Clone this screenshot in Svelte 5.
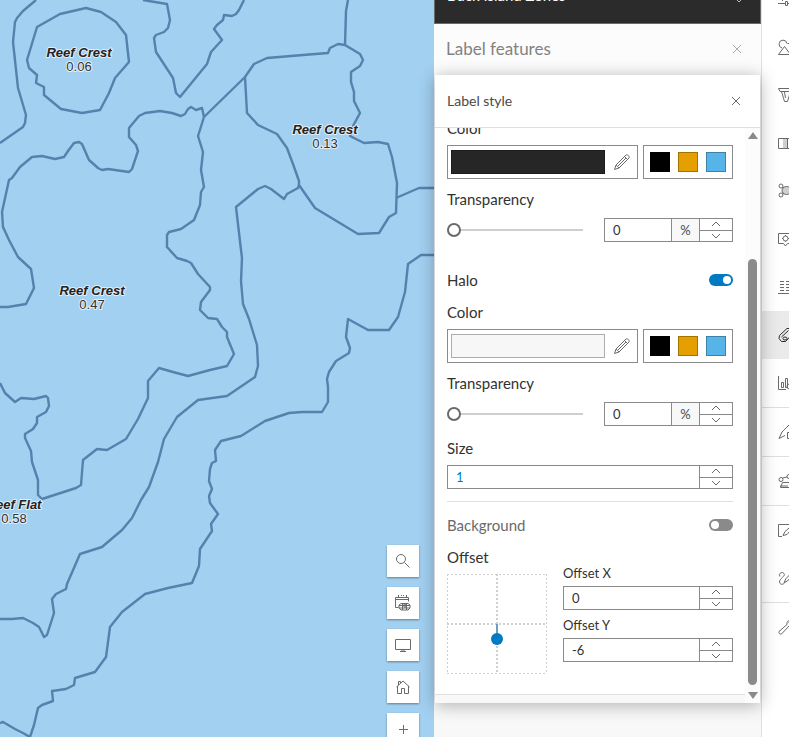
<script lang="ts">
  const zones: string[] = [
    "M37 27 60 14 86 8 101 12 116 22 126 35 129 62 115 78 109 93 100 110 82 113 61 109 44 95 44 87 36 83 37 75 29 68 27 60Z",
    "M36 0 23 11 17 18 15 22 13 42 18 88 26 115 25 123 23 127 0 143",
    "M143 0 167 4 170 20 168 28 164 32 156 35 154 38 156 52 173 78 176 93 180 97 207 64 211 52 222 40 214 29 217 25 223 20 224 15 232 16 236 14 239 10 244 0",
    "M204 117 202 108 196 110 191 107 188 109 185 114 181 116 172 113 160 111 145 113 139 116 129 128 129 137 136 145 138 151 132 169 129 172 108 169 102 170 98 168 89 160 82 144 79 142 74 143 68 151 64 157 55 159 42 156 32 157 20 167 12 178 9 180 2 212 3 227 9 240 18 257 31 269 34 288 26 304 8 307 0 307",
    "M204 117 198 136 203 152 201 170 204 187 201 192 200 205 194 220 181 229 169 232 167 235 167 247 177 258 187 261 191 263 198 274 210 287 210 290 201 302 200 310 208 318 217 319 222 327 227 332 227 337 234 354 227 366 210 370 188 376 173 372 159 368 148 381 148 398 138 419 126 439 107 450 97 449 83 460 81 485 76 488 42 499 38 495 38 480 32 462 31 451 25 438 25 434 33 429 37 423 37 417 46 412 49 406 48 398 46 396 34 399 21 398 15 402 5 393 0 383",
    "M204 117 245 77 254 64 267 58 303 55 328 53 330 48 338 44 345 45 360 54 363 60 360 66 351 72 351 82 354 92 354 101 360 113 353 126 350 136 364 143 378 142 388 144 392 157 397 183 396 213 389 217 379 233 358 234 315 208 299 185 299 181 293 164 287 148 277 134 258 125 247 113 245 77",
    "M348 0 346 11 345 45",
    "M396 198 419 188 434 188",
    "M299 185 298 188 287 194 284 199 271 189 265 186 258 189 236 207 241 250 242 258 241 281 243 304 249 319 257 345 258 366 255 377 227 396 198 400 177 417 164 439 158 462 149 487 141 500 132 518 122 530 102 547 80 554 67 584 66 589 56 594 52 599 54 613 47 635 44 637 39 627 33 623 23 618 12 619 0 619",
    "M434 255 421 255 408 264 405 292 398 317 389 330 368 330 348 319 346 337 350 348 349 353 336 361 329 372 327 379 328 387 328 402 322 412 302 412 289 413 265 421 241 436 221 441 215 450 216 461 212 463 210 469 209 481 212 489 209 496 210 503 218 514 211 524 212 531 200 549 199 566 192 583 168 588 145 594 122 612 110 627 106 657 95 672 75 678 74 685 66 689 52 691 53 701 42 705 38 708 34 725 30 737 23 733 15 729 3 722 0 723",
  ];

  const zoneLabels = [
    { x: 79, y: 57, name: "Reef Crest", value: "0.06" },
    { x: 325, y: 134, name: "Reef Crest", value: "0.13" },
    { x: 92, y: 295, name: "Reef Crest", value: "0.47" },
    { x: 14, y: 509, name: "Reef Flat", value: "0.58" },
  ];

  const mapTools = [
    { title: "Search", d: "M9.5 9.5 14.5 14.5M6 1.5a4.5 4.5 0 1 0 0 9a4.5 4.5 0 0 0 0-9Z" },
    { title: "Basemap", d: "M3.5 12.5H.5V2.5H13.5V6.5M.5 4.5H13.5M3.5 0V2M6.5 0V1M8.5 0V1M11.5 0V2M6 8.5H13L15 10V13L13 15H6L4 13V10ZM4 10.5H15M4 13H15M7.5 8V15M11.5 8V15M9 9H11V12H9Z" },
    { title: "Display", d: "M.5 2.5H15.5V12.5H.5ZM7 12.5V14.5M9 12.5V14.5M5 14.5H11" },
    { title: "Default view", d: "M1.5 8 8 2 14.5 8M2.5 7V14.5H6.5V9.5H9.5V14.5H13.5V7M3.5 6V2.5H5.5V4" },
    { title: "Zoom in", d: "M8.5 4V13M4 8.5H13" },
  ];

  const tools = [
    { title: "Properties", d: "M0 5.5H5M9 5.5H16M5.5 3.5H8.5V7.5H5.5ZM0 12.5H7M7.5 10.5H9.5V14.5H7.5ZM10 12.5H16M4.5 10V7.5" },
    { title: "Styles", d: "M4 9A4 4 0 1 1 9 4.500M9.500 4.500H15.500V10.500M.5 15.500 6.500 7.500 12.500 15.500Z" },
    { title: "Filter", d: "M.5 1.500H15.500L14 4.500H2ZM3.500 4.500 6.500 14.500H9.500L12.500 4.500M6.500 5 7.500 11" },
    { title: "Effects", shade: "M5 4H9V13H5Z", d: "M.5 3.5H15.5V13.5H.5ZM9.500 4V13M12.500 4V13" },
    { title: "Aggregation", shade: "M4 7.5a4.500 4 0 1 0 9 0a4.500 4 0 1 0-9 0", d: "M1 3a2 2 0 1 0 4 0a2 2 0 1 0-4 0M1 12a2 2 0 1 0 4 0a2 2 0 1 0-4 0M4 7.5a4.5 4 0 1 0 9 0a4.5 4 0 1 0-9 0M4.5 4 6 5M4.5 11 6 10" },
    { title: "Pop-ups", d: "M.5 2.5H14.5V12.5H9.5L7.5 15 5.5 12.5H.5ZM5 7.5a2.5 2.5 0 1 0 5 0a2.5 2.5 0 1 0-5 0M7.5 4V5M7.5 10V11M4 7.5H5M10 7.5H11" },
    { title: "Fields", d: "M2 2.5H6M8 2.5H16M2 5.5H6M8 5.5H16M2 8.5H6M8 8.5H16M2 11.5H6M8 11.5H16M0 14.5H16" },
    { title: "Labels", active: true, d: "M1.5 8.5 9 1.5H14.5V7L7.5 14.5H3.5L1 11.5ZM3.5 10 10.5 3.5M5 11.5a2 1.5 0 1 0 4 0a2 1.5 0 1 0-4 0" },
    { title: "Charts", divider: true, d: "M.5 1V14.5H8M3.5 7.5H5.5V12.5H3.5ZM7.5 3.5H9.5V12.5H7.5ZM11.5 1V6M9 11.5a2.5 2.5 0 1 0 5 0a2.5 2.5 0 1 0-5 0M11.5 8V9M11.5 14V15" },
    { title: "Edit", divider: true, d: "M1 14.5 4 8 11 1 13 3M1 14.500 7 11.500M9.5 8.5H15.5V14.5H9.5Z" },
    { title: "Share", divider: true, d: "M9 3.5a2 2 0 1 0 4 0a2 2 0 1 0-4 0M1 6.5a2 2 0 1 0 4 0a2 2 0 1 0-4 0M4.5 5 9 4M2.5 14.5 4.5 9.5H13.5L15.5 14.5ZM2 13H10" },
    { title: "Sketch", d: "M4 14.5H.5V2.5H15.5M5 13.5 7 9.5 14 3.5 15.5 5 9 12.5Z" },
    { title: "Directions", divider: true, d: "M2 6.5A2.5 2.5 0 1 1 6 3.5C8 6 1 9 1.5 12C2 15 5 15 7 12.5M6 12.5 8 8.5 14 2.5 15.5 4 9.5 11Z" },
    { title: "Map tools", d: "M1 12.5 9 5.5C8.5 3 10 1 13 1.5L11 3.5 12.5 5 15 3C15.5 6 13 7.5 11 7L3.5 15C1.5 15.5.5 14 1 12.5Z" },
  ];

  const presets = ["black", "orange", "sky"];

  let transparency = 0;
  let haloTransparency = 0;
  let halo = true;
  let haloSize = 1;
  let background = false;
  let offsetX = 0;
  let offsetY = -6;

  // 100px pad, 2.5px for each unit of offset
  $: dotX = 50 + offsetX * 2.5;
  $: dotY = 50 - offsetY * 2.5;
</script>

{#snippet steppers(step: (by: number) => void)}
  <span class="steppers">
    <button aria-label="Increase" on:click={() => step(1)}>
      <svg width="10" height="6"><path d="M1 5 5 1 9 5" /></svg>
    </button>
    <button aria-label="Decrease" on:click={() => step(-1)}>
      <svg width="10" height="6"><path d="M1 1 5 5 9 1" /></svg>
    </button>
  </span>
{/snippet}

{#snippet colorRow(tone: string)}
  <div class="color-row">
    <button class="picker" aria-label="Edit color">
      <span class="bar {tone}"></span>
      <svg class="pencil" width="16" height="16">
        <path d="M.5 15.500 2 11 12 1C13.500 0 16 2.500 15 4L5 14ZM2 11 5 14M10.500 2.500 13.500 5.500M3.500 12.500 12 4" />
      </svg>
    </button>
    <div class="presets">
      {#each presets as preset}
        <button class="swatch {preset}" aria-label={preset}></button>
      {/each}
    </div>
  </div>
{/snippet}

<div class="app">
  <main class="map">
    <svg class="zones" width="100%" height="100%">
      {#each zones as d}
        <path {d} />
      {/each}
      {#each zoneLabels as label}
        <text class="zone-name" x={label.x} y={label.y}>{label.name}</text>
        <text x={label.x} y={label.y + 14}>{label.value}</text>
      {/each}
    </svg>
    <div class="map-tools">
      {#each mapTools as tool}
        <button aria-label={tool.title}>
          <svg width="16" height="16"><path d={tool.d} /></svg>
        </button>
      {/each}
    </div>
  </main>

  <aside class="panel">
    <button class="layer">
      <span>Buck Island Zones</span>
      <svg width="10" height="10"><path d="M1 1 5 5 9 1" /></svg>
    </button>
    <header class="panel-header">
      <h2>Label features</h2>
      <button class="close" aria-label="Close label features">
        <svg width="10" height="10"><path d="M1 1 9 9M9 1 1 9" /></svg>
      </button>
    </header>

    <section class="card">
      <header class="card-header">
        <h3>Label style</h3>
        <button class="close" aria-label="Close label style">
          <svg width="10" height="10"><path d="M1 1 9 9M9 1 1 9" /></svg>
        </button>
      </header>
      <div class="card-body">
        <div class="scroll">
          <div class="form">
            <div class="label">Color</div>
            {@render colorRow("dark")}

            <label class="label after-color" for="transparency">Transparency</label>
            <div class="slider-row">
              <input id="transparency" type="range" min="0" max="100" bind:value={transparency} />
              <div class="number">
                <input type="text" aria-label="Transparency percent" bind:value={transparency} />
                <span class="unit">%</span>
                {@render steppers((by) => (transparency += by))}
              </div>
            </div>

            <div class="toggle-row halo">
              <label for="halo">Halo</label>
              <input id="halo" type="checkbox" role="switch" bind:checked={halo} />
            </div>
            <div class="label">Color</div>
            {@render colorRow("light")}

            <label class="label after-color" for="halo-transparency">Transparency</label>
            <div class="slider-row">
              <input id="halo-transparency" type="range" min="0" max="100" bind:value={haloTransparency} />
              <div class="number">
                <input type="text" aria-label="Halo transparency percent" bind:value={haloTransparency} />
                <span class="unit">%</span>
                {@render steppers((by) => (haloTransparency += by))}
              </div>
            </div>

            <label class="label" for="halo-size">Size</label>
            <div class="number">
              <input id="halo-size" class="accent" type="text" bind:value={haloSize} />
              {@render steppers((by) => (haloSize += by))}
            </div>

            <hr />

            <div class="toggle-row muted">
              <label for="background">Background</label>
              <input id="background" type="checkbox" role="switch" bind:checked={background} />
            </div>

            <div class="offset">
              <div>
                <div class="label">Offset</div>
                <svg class="pad" width="100" height="100">
                  <path class="grid" d="M0 .5H100M0 99.5H100M.5 0V100M99.5 0V100" />
                  <path class="grid axis" d="M0 50H100M50 0V100" />
                  <line x1="50" y1="50" x2={dotX} y2={dotY} />
                  <circle cx={dotX} cy={dotY} r="6" />
                </svg>
              </div>
              <div class="offset-fields">
                <label for="offset-x">Offset X</label>
                <div class="number">
                  <input id="offset-x" type="text" bind:value={offsetX} />
                  {@render steppers((by) => (offsetX += by))}
                </div>
                <label for="offset-y">Offset Y</label>
                <div class="number">
                  <input id="offset-y" type="text" bind:value={offsetY} />
                  {@render steppers((by) => (offsetY += by))}
                </div>
              </div>
            </div>
          </div>
          <div class="form-end"></div>
        </div>
        <div class="scrollbar">
          <svg width="10" height="8"><path d="M5 0 10 7H0Z" /></svg>
          <div class="track"><div class="thumb"></div></div>
          <svg width="10" height="8"><path d="M0 1H10L5 8Z" /></svg>
        </div>
      </div>
    </section>
  </aside>

  <nav class="rail">
    <div class="rail-list">
      {#each tools as tool}
        <button class:active={tool.active} class:divider={tool.divider} aria-label={tool.title}>
          <svg width="16" height="16">
            {#if tool.shade}
              <path class="shade" d={tool.shade} />
            {/if}
            <path d={tool.d} />
          </svg>
        </button>
      {/each}
    </div>
  </nav>
</div>

<style>
  :global(body) {
    margin: 0;
    font-family: Lato, "Open Sans", sans-serif;
    color: #323232;
  }

  .app {
    display: flex;
    height: 100vh;
    overflow: hidden;
    background: #f8f8f8;
  }

  .app * {
    box-sizing: border-box;
  }

  button {
    display: flex;
    align-items: center;
    margin: 0;
    padding: 0;
    border: none;
    background: none;
    font: inherit;
    color: inherit;
    cursor: pointer;
  }

  svg {
    display: block;
    flex-shrink: 0;
    fill: none;
    stroke: #6a6a6a;
  }

  h2,
  h3 {
    margin: 0;
    font-weight: 400;
  }

  .map {
    position: relative;
    flex: 1;
    min-width: 0;
    overflow: hidden;
    background: #a2d0f1;
  }

  .zones path {
    stroke: #5581ad;
    stroke-width: 2.4;
    stroke-linejoin: round;
  }

  .zones text {
    font-family: "Liberation Sans", Arial, sans-serif;
    font-size: 13px;
    text-anchor: middle;
    fill: #323232;
    stroke: #e4eef5;
    stroke-width: 2;
    stroke-linejoin: round;
    paint-order: stroke;
  }

  .zones .zone-name {
    font-weight: 700;
    font-style: italic;
    fill: #222;
  }

  .map-tools {
    position: absolute;
    right: 15px;
    bottom: -8px;
    display: flex;
    flex-direction: column;
    gap: 10px;
  }

  .map-tools button {
    justify-content: center;
    width: 32px;
    height: 32px;
    background: #fff;
    box-shadow: 0 1px 2px rgba(0, 0, 0, 0.4);
  }

  .panel {
    display: flex;
    flex: 0 0 327px;
    flex-direction: column;
    position: relative;
    z-index: 1;
    min-width: 0;
    background: #f8f8f8;
  }

  .layer {
    align-items: flex-end;
    justify-content: space-between;
    height: 24px;
    padding: 0 16px 16px 12px;
    overflow: hidden;
    border: 1px solid #6a6a6a;
    border-top: none;
    background: #2b2b2b;
    color: #fff;
    font-size: 15px;
    line-height: 24px;
  }

  .layer svg {
    stroke: #bbb;
  }

  .panel-header {
    display: flex;
    align-items: center;
    justify-content: space-between;
    height: 51px;
    padding: 0 19px 2px 12px;
    background: #fcfcfc;
  }

  h2 {
    color: #828282;
    font-size: 17px;
    line-height: 20px;
  }

  .panel-header svg {
    stroke: #aaa;
  }

  .card {
    display: flex;
    flex: 1;
    flex-direction: column;
    min-height: 0;
    margin: 0 1px 34px;
    background: #fff;
    box-shadow: 0 2px 16px rgba(0, 0, 0, 0.3);
  }

  .card-header {
    display: flex;
    flex-shrink: 0;
    align-items: center;
    justify-content: space-between;
    height: 53px;
    padding: 0 19px 0 12px;
    border-bottom: 1px solid #dfdfdf;
  }

  h3 {
    color: #4a4a4a;
    font-size: 14px;
    line-height: 20px;
  }

  .card-body {
    display: flex;
    flex: 1;
    min-height: 0;
  }

  .scroll {
    display: flex;
    flex: 1;
    flex-direction: column;
    justify-content: flex-end;
    min-width: 0;
    overflow: hidden;
  }

  .form {
    padding: 0 12px 20px;
    font-size: 15px;
    line-height: 20px;
  }

  .form-end {
    flex-shrink: 0;
    height: 9px;
    border-top: 1px solid #dfdfdf;
    background: #f8f8f8;
  }

  .label {
    display: block;
    margin: 12px 0 7px;
  }

  .after-color {
    margin: 10px 0 9px;
  }

  .color-row {
    display: flex;
    gap: 5px;
  }

  .picker,
  .presets {
    height: 34px;
    border: 1px solid #8a8a8a;
  }

  .picker {
    flex: 1;
    gap: 9px;
    padding: 0 7px 0 3px;
  }

  .bar {
    flex: 1;
    height: 24px;
    border: 1px solid #1c1c1c;
  }

  .dark {
    background: #262626;
  }

  .light {
    border-color: #adadad;
    background: #f7f7f7;
  }

  .presets {
    display: flex;
    align-items: center;
    gap: 8px;
    padding: 0 6px;
  }

  .swatch {
    width: 20px;
    height: 20px;
    border: 1px solid #000;
  }

  .black {
    background: #000;
  }

  .orange {
    border-color: #a37100;
    background: #e69f00;
  }

  .sky {
    border-color: #3d80a8;
    background: #56b4e9;
  }

  .slider-row {
    display: flex;
    gap: 21px;
  }

  .slider-row .number {
    flex: 0 0 129px;
  }

  input[type="range"] {
    flex: 1;
    min-width: 0;
    height: 24px;
    margin: 0;
    appearance: none;
    background: linear-gradient(#cfcfcf, #cfcfcf) center / 100% 2px no-repeat;
  }

  input[type="range"]::-webkit-slider-thumb {
    width: 14px;
    height: 14px;
    appearance: none;
    border: 2px solid #6a6a6a;
    border-radius: 50%;
    background: #fff;
  }

  .number {
    display: flex;
    min-width: 0;
    height: 24px;
    border: 1px solid #8a8a8a;
    background: #fff;
  }

  .number input {
    flex: 1;
    width: 0;
    min-width: 0;
    padding: 0 8px;
    border: none;
    background: none;
    color: #323232;
    font-family: inherit;
    font-size: 13px;
  }

  .number .accent {
    color: #007ac2;
  }

  .unit {
    flex: 0 0 28px;
    border-left: 1px solid #8a8a8a;
    background: #f8f8f8;
    color: #4a4a4a;
    font-size: 13px;
    text-align: center;
  }

  .steppers {
    display: flex;
    flex: 0 0 33px;
    flex-direction: column;
    border-left: 1px solid #8a8a8a;
  }

  .steppers button {
    flex: 1;
    justify-content: center;
  }

  .steppers button + button {
    border-top: 1px solid #8a8a8a;
  }

  .toggle-row {
    display: flex;
    align-items: center;
    justify-content: space-between;
    margin-top: 13px;
  }

  .halo {
    margin-top: 28px;
  }

  .muted {
    color: #6a6a6a;
  }

  input[type="checkbox"] {
    display: flex;
    align-items: center;
    width: 24px;
    height: 12px;
    margin: 0;
    padding: 0 2px;
    appearance: none;
    border-radius: 6px;
    background: #8a8a8a;
  }

  input[type="checkbox"]::before {
    content: "";
    width: 8px;
    height: 8px;
    border-radius: 50%;
    background: #fff;
  }

  input[type="checkbox"]:checked {
    justify-content: flex-end;
    background: #007ac2;
  }

  hr {
    height: 1px;
    margin: 12px 0 0;
    border: none;
    background: #dfdfdf;
  }

  .offset {
    display: flex;
    gap: 16px;
  }

  .pad .grid {
    stroke: #cfcfcf;
    stroke-dasharray: 2 2;
  }

  .pad .axis {
    stroke-width: 2;
  }

  .pad line {
    stroke: #6a9fc4;
    stroke-width: 2;
  }

  .pad circle {
    fill: #007ac2;
    stroke: none;
  }

  .offset-fields {
    flex: 1;
    min-width: 0;
    padding-top: 30px;
    font-size: 13px;
    line-height: 16px;
  }

  .offset-fields label {
    display: block;
    margin-bottom: 5px;
  }

  .offset-fields .number {
    margin-bottom: 7px;
  }

  .number .unit {
    line-height: 22px;
  }

  .scrollbar {
    display: flex;
    flex: 0 0 15px;
    flex-direction: column;
    align-items: center;
    padding: 4px 0;
    background: #fcfcfc;
  }

  .scrollbar path {
    fill: #8a8a8a;
    stroke: none;
  }

  .track {
    display: flex;
    flex: 1;
    flex-direction: column;
    justify-content: flex-end;
    padding: 6px 0;
  }

  .thumb {
    width: 9px;
    height: 79%;
    border-radius: 5px;
    background: #8a8a8a;
  }

  .rail {
    flex: 0 0 28px;
    overflow: hidden;
    border-left: 1px solid #dfdfdf;
    background: #fff;
  }

  .rail-list {
    margin-top: -25px;
  }

  .rail button {
    width: 100%;
    height: 48px;
    padding-left: 16px;
  }

  .rail .divider {
    height: 49px;
    border-bottom: 1px solid #dfdfdf;
  }

  .rail .shade {
    fill: #cfcfcf;
    stroke: none;
  }

  .rail .active {
    background: #eaeaea;
  }

  .rail .active svg {
    stroke: #2b2b2b;
  }
</style>
